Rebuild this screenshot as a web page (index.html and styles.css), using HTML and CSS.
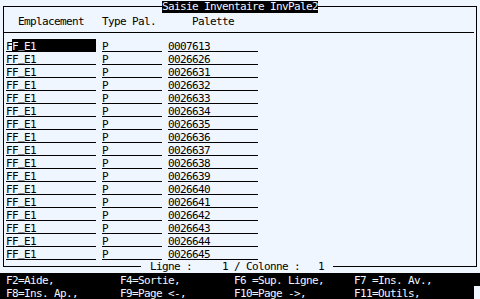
FILE: index.html
```html
<!DOCTYPE html>
<html lang="fr">
<head>
    <meta charset="UTF-8">
    <meta name="viewport" content="width=device-width, initial-scale=1.0">
    <title>Saisie Inventaire InvPale2</title>
    <link rel="stylesheet" href="styles.css">
</head>
<body>
    <div class="frame">
        <div class="frame-title"><span>Saisie Inventaire InvPale2</span></div>

        <div class="grid-row head">
            <div class="col-emp">Emplacement</div>
            <div class="col-type">Type Pal.</div>
            <div class="col-pal">Palette</div>
        </div>
        <div class="sep"></div>

        <div class="rows">
            <div class="grid-row line">
                <div class="field field-active">F<span class="cursor">F<span class="us">_</span>E1</span></div>
                <div class="field">P</div>
                <div class="field">0007613</div>
            </div>
            <div class="grid-row line">
                <div class="field">FF<span class="us">_</span>E1</div>
                <div class="field">P</div>
                <div class="field">0026626</div>
            </div>
            <div class="grid-row line">
                <div class="field">FF<span class="us">_</span>E1</div>
                <div class="field">P</div>
                <div class="field">0026631</div>
            </div>
            <div class="grid-row line">
                <div class="field">FF<span class="us">_</span>E1</div>
                <div class="field">P</div>
                <div class="field">0026632</div>
            </div>
            <div class="grid-row line">
                <div class="field">FF<span class="us">_</span>E1</div>
                <div class="field">P</div>
                <div class="field">0026633</div>
            </div>
            <div class="grid-row line">
                <div class="field">FF<span class="us">_</span>E1</div>
                <div class="field">P</div>
                <div class="field">0026634</div>
            </div>
            <div class="grid-row line">
                <div class="field">FF<span class="us">_</span>E1</div>
                <div class="field">P</div>
                <div class="field">0026635</div>
            </div>
            <div class="grid-row line">
                <div class="field">FF<span class="us">_</span>E1</div>
                <div class="field">P</div>
                <div class="field">0026636</div>
            </div>
            <div class="grid-row line">
                <div class="field">FF<span class="us">_</span>E1</div>
                <div class="field">P</div>
                <div class="field">0026637</div>
            </div>
            <div class="grid-row line">
                <div class="field">FF<span class="us">_</span>E1</div>
                <div class="field">P</div>
                <div class="field">0026638</div>
            </div>
            <div class="grid-row line">
                <div class="field">FF<span class="us">_</span>E1</div>
                <div class="field">P</div>
                <div class="field">0026639</div>
            </div>
            <div class="grid-row line">
                <div class="field">FF<span class="us">_</span>E1</div>
                <div class="field">P</div>
                <div class="field">0026640</div>
            </div>
            <div class="grid-row line">
                <div class="field">FF<span class="us">_</span>E1</div>
                <div class="field">P</div>
                <div class="field">0026641</div>
            </div>
            <div class="grid-row line">
                <div class="field">FF<span class="us">_</span>E1</div>
                <div class="field">P</div>
                <div class="field">0026642</div>
            </div>
            <div class="grid-row line">
                <div class="field">FF<span class="us">_</span>E1</div>
                <div class="field">P</div>
                <div class="field">0026643</div>
            </div>
            <div class="grid-row line">
                <div class="field">FF<span class="us">_</span>E1</div>
                <div class="field">P</div>
                <div class="field">0026644</div>
            </div>
            <div class="grid-row line">
                <div class="field">FF<span class="us">_</span>E1</div>
                <div class="field">P</div>
                <div class="field">0026645</div>
            </div>
        </div>
    </div>

    <div class="status">
        <span class="rule rule-left"></span>
        <span class="status-text">Ligne :     1 / Colonne :   1</span>
        <span class="rule"></span>
    </div>

    <div class="keys">
        <span>F2=Aide,</span>
        <span>F4=Sortie,</span>
        <span>F6 =Sup. Ligne,</span>
        <span>F7 =Ins. Av.,</span>
        <span>F8=Ins. Ap.,</span>
        <span>F9=Page &lt;-,</span>
        <span>F10=Page -&gt;,</span>
        <span class="key-last">F11=Outils,<i class="caret"></i></span>
    </div>
</body>
</html>
```

FILE: styles.css
```css
body {
    margin: 0;
    width: 480px;
    height: 299px;
    overflow: hidden;
    background: #f0f6ff;
    color: #000;
    font-family: "DejaVu Sans Mono", monospace;
    font-size: 11px;
    letter-spacing: -0.62px;
}

/* cadre principal */
.frame {
    margin: 6px 3px 0;
    height: 261px;
    border: 1px solid #000;
    border-bottom: none;
    box-sizing: border-box;
}

.frame-title {
    margin-top: -7px;
    height: 13px;
    text-align: center;
}

.frame-title span {
    display: inline-block;
    height: 12px;
    line-height: 12px;
    background: #000;
    color: #f0f6ff;
}

.grid-row {
    display: grid;
    grid-template-columns: 90px 60px 90px;
    column-gap: 6px;
    padding-left: 2px;
    height: 13px;
}

.head {
    line-height: 18px;
}

.col-emp {
    padding-left: 12px;
}

.col-pal {
    padding-left: 24px;
}

.sep {
    margin: 6px 2px 6px 0;
    border-top: 1px solid #000;
}

.field {
    height: 13px;
    box-sizing: border-box;
    border-bottom: 1px solid #000;
    line-height: 15px;
    white-space: nowrap;
}

.field-active {
    display: flex;
}

/* le souligne du champ reste au-dessus du trait */
.us {
    line-height: 0;
    vertical-align: 2px;
}

.cursor {
    flex: 1;
    height: 12px;
    background: #000;
    color: #f0f6ff;
}

/* ligne d'etat */
.status {
    display: flex;
    align-items: center;
    height: 13px;
    margin: -7px 3px 0;
}

.rule {
    flex: 1;
    height: 1px;
    background: #000;
}

.rule-left {
    flex: 0 0 138px;
}

.status-text {
    margin: 0 9px;
    line-height: 12px;
    white-space: pre;
}

/* touches de fonction */
.keys {
    display: grid;
    grid-template-columns: 114px 114px 120px 1fr;
    grid-auto-rows: 13px;
    padding-left: 6px;
    background: #000;
    color: #f0f6ff;
    line-height: 16px;
    white-space: nowrap;
}

.key-last {
    display: flex;
    justify-content: space-between;
}

.caret {
    width: 6px;
    height: 13px;
    background: #f0f6ff;
}
```
